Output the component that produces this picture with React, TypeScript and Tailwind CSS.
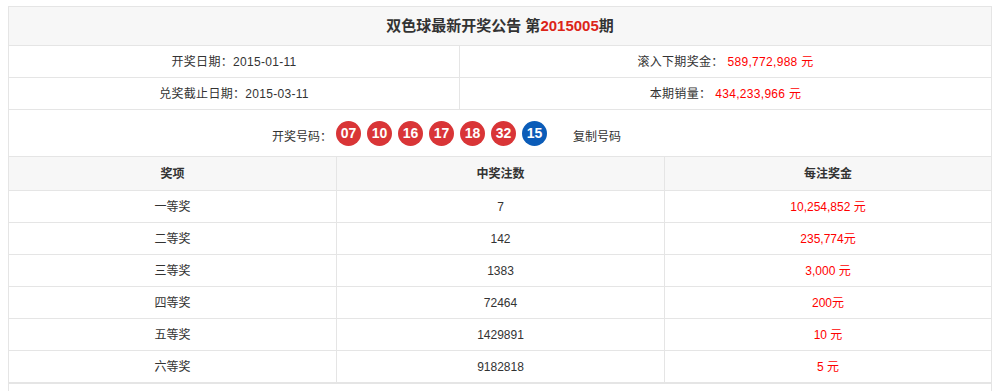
import React from "react";

const prizes = [
  { name: "一等奖", count: "7", money: "10,254,852 元" },
  { name: "二等奖", count: "142", money: "235,774元" },
  { name: "三等奖", count: "1383", money: "3,000 元" },
  { name: "四等奖", count: "72464", money: "200元" },
  { name: "五等奖", count: "1429891", money: "10 元" },
  { name: "六等奖", count: "9182818", money: "5 元" },
];

const reds = ["07", "10", "16", "17", "18", "32"];

const Ball = ({ n, blue }: { n: string; blue?: boolean }) => (
  <span
    className={`flex h-[25px] w-[25px] items-center justify-center rounded-full text-[14px] font-bold text-white ${
      blue ? "bg-[#0b5cb8]" : "bg-[#d93537]"
    }`}
  >
    {n}
  </span>
);

export default function App() {
  return (
    <div
      className="min-h-screen bg-white pl-[8px] pt-[6px] text-[12px] text-[#333]"
      style={{ fontFamily: '"Liberation Sans", "Noto Sans CJK SC", sans-serif' }}
    >
      <div className="w-[984px] border border-b-0 border-[#e5e5e5]">
        <div className="flex h-[39px] items-center justify-center border-b border-[#e5e5e5] bg-[#f7f7f7] text-[15px] font-bold text-[#333]">
          双色球最新开奖公告 第<span className="text-[#dc2418]">2015005</span>期
        </div>

        <div className="grid h-[32px] grid-cols-[451px_1fr] border-b border-[#e5e5e5] tracking-[0.3px]">
          <div className="flex items-center justify-center border-r border-[#e5e5e5]">
            开奖日期：2015-01-11
          </div>
          <div className="flex items-center justify-center">
            滚入下期奖金：<span className="ml-[4px] text-[#f00]">589,772,988 元</span>
          </div>
        </div>
        <div className="grid h-[32px] grid-cols-[451px_1fr] border-b border-[#e5e5e5] tracking-[0.3px]">
          <div className="flex items-center justify-center border-r border-[#e5e5e5]">
            兑奖截止日期：2015-03-11
          </div>
          <div className="flex items-center justify-center">
            本期销量：<span className="ml-[4px] text-[#f00]">434,233,966 元</span>
          </div>
        </div>

        <div className="flex h-[47px] items-center border-b border-[#e5e5e5] pl-[263px]">
          <span className="mt-[8px] w-[64px]">开奖号码：</span>
          <div className="flex gap-[6px]">
            {reds.map((n) => (
              <Ball key={n} n={n} />
            ))}
            <Ball n="15" blue />
          </div>
          <span className="ml-[26px] mt-[8px]">复制号码</span>
        </div>

        <div className="grid h-[34px] grid-cols-[328px_328px_1fr] border-b border-[#e5e5e5] bg-[#f7f7f7] font-bold">
          <div className="flex items-center justify-center border-r border-[#e5e5e5]">奖项</div>
          <div className="flex items-center justify-center border-r border-[#e5e5e5]">中奖注数</div>
          <div className="flex items-center justify-center">每注奖金</div>
        </div>

        {prizes.map((p, i) => (
          <div
            key={p.name}
            className={`grid h-[32px] grid-cols-[328px_328px_1fr] border-[#e5e5e5] ${
              i === prizes.length - 1 ? "h-[33px] border-b-2" : "border-b"
            }`}
          >
            <div className="flex items-center justify-center border-r border-[#e5e5e5]">{p.name}</div>
            <div className="flex items-center justify-center border-r border-[#e5e5e5]">{p.count}</div>
            <div className="flex items-center justify-center text-[#f00]">{p.money}</div>
          </div>
        ))}

        <div className="h-[30px]" />
      </div>
    </div>
  );
}
